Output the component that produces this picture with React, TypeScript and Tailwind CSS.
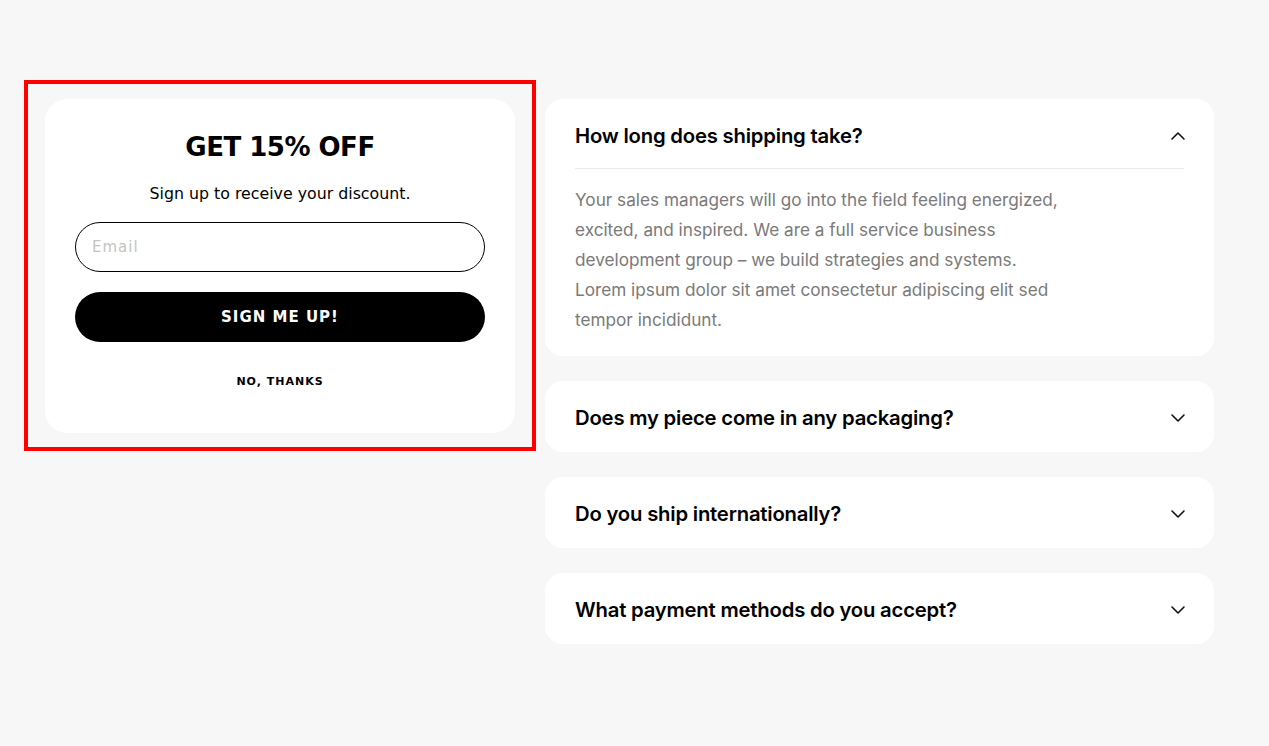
import React from 'react';

const faqs = [
  {
    q: 'How long does shipping take?',
    open: true,
    a: 'Your sales managers will go into the field feeling energized, excited, and inspired. We are a full service business development group – we build strategies and systems. Lorem ipsum dolor sit amet consectetur adipiscing elit sed tempor incididunt.',
  },
  { q: 'Does my piece come in any packaging?', open: false, a: '' },
  { q: 'Do you ship internationally?', open: false, a: '' },
  { q: 'What payment methods do you accept?', open: false, a: '' },
];

const Chevron: React.FC<{ up?: boolean }> = ({ up }) => (
  <svg width="16" height="10" viewBox="0 0 16 10" fill="none" className="shrink-0">
    <polyline
      points={up ? '2,8 8,2 14,8' : '2,2 8,8 14,2'}
      stroke="#111"
      strokeWidth="1.6"
      strokeLinecap="round"
      strokeLinejoin="round"
    />
  </svg>
);

const SignupCard: React.FC = () => (
  <div className="border-4 border-[#ff0000] pt-[15px] pb-[14px] px-[17px]">
    <div className="w-[470px] bg-white rounded-[22px] pt-[33px] pb-[43px] px-[30px] flex flex-col items-center font-['DejaVu_Sans',sans-serif]">
      <h2 className="text-[26px] leading-[30px] font-bold text-black tracking-[-0.5px]">GET 15% OFF</h2>
      <p className="mt-[21px] text-[15.8px] leading-[22px] text-black">Sign up to receive your discount.</p>
      <input
        type="text"
        placeholder="Email"
        className="mt-[17px] w-full h-[50px] rounded-full border border-black px-[16px] text-[15px] tracking-[1px] placeholder:text-[#c4c4c4] outline-none"
      />
      <button className="mt-[20px] w-full h-[50px] rounded-full bg-black text-white text-[15px] font-bold tracking-[1px]">
        SIGN ME UP!
      </button>
      <button className="mt-[32px] text-[11px] leading-[16px] font-bold tracking-[1px] text-black">NO, THANKS</button>
    </div>
  </div>
);

const FaqItem: React.FC<{ q: string; a: string; open: boolean }> = ({ q, a, open }) => (
  <div className="bg-white rounded-[18px] font-['Inter',sans-serif]">
    <div className={`flex items-center justify-between pl-[30px] pr-[28px] pt-[25px] ${open ? 'pb-[20px]' : 'pb-[22px]'}`}>
      <span className="text-[20.3px] leading-[24px] font-semibold text-black tracking-[-0.2px]">{q}</span>
      <Chevron up={open} />
    </div>
    {open && (
      <>
        <div className="mx-[30px] h-px bg-[#ebebeb]" />
        <p className="px-[30px] pt-[16px] pb-[21px] max-w-[550px] text-[17.2px] leading-[30px] text-[#7a7a7a]">{a}</p>
      </>
    )}
  </div>
);

export default function App() {
  return (
    <div className="min-h-screen bg-[#f7f7f7] flex items-start pt-[80px] pl-[24px]">
      <SignupCard />
      <div className="ml-[9px] mt-[19px] w-[669px] flex flex-col gap-[25px]">
        {faqs.map((f, i) => (
          <FaqItem key={i} q={f.q} a={f.a} open={f.open} />
        ))}
      </div>
    </div>
  );
}
